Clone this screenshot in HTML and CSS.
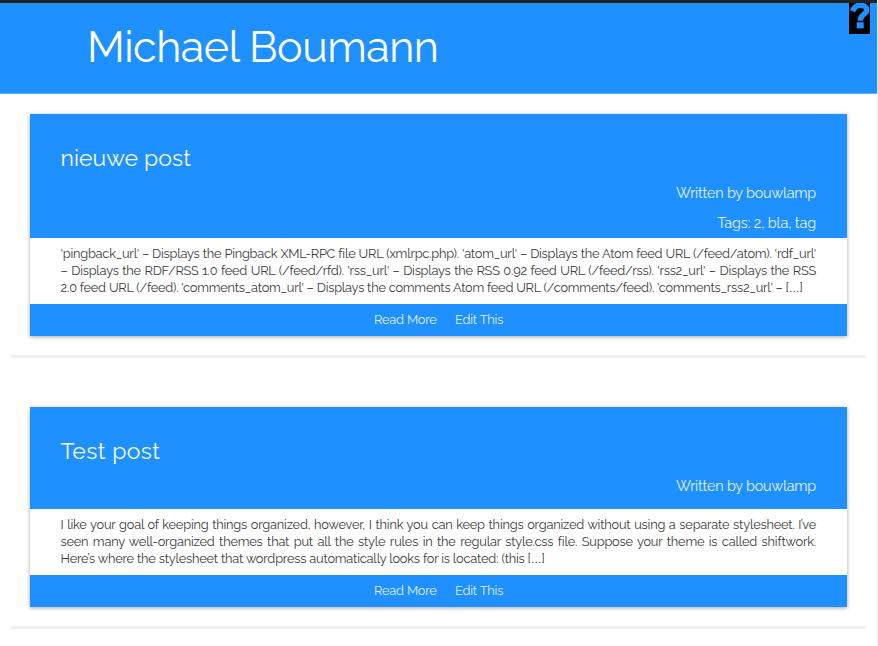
FILE: index.html
```html
<!DOCTYPE html>
<html lang="nl">
<head>
<meta charset="utf-8">
<title>Michael Boumann</title>
<link rel="stylesheet" href="styles.css">
</head>
<body>
<header class="site-header">
  <h1 class="site-title">Michael Boumann</h1>
  <svg class="help" viewBox="0 0 21 31" aria-hidden="true">
    <path fill="#000" d="M0 0H21V31H0Z"/>
    <path fill="none" stroke="#1e90ff" stroke-width="5.4" d="M3.6 8.2C5 4.5 7.5 2.2 11.2 2.2C15 2.2 17.8 4 17.8 7C17.8 11.5 11.2 11 11.2 17.8"/>
    <path fill="#1e90ff" d="M7.7 19.2H14.7V25.4H7.7Z"/>
  </svg>
</header>
<main class="posts">
  <article class="post">
    <div class="post-head tagged">
      <h2 class="post-title first">nieuwe post</h2>
      <p class="meta"><span class="author">Written by bouwlamp</span></p>
      <p class="meta"><span class="tags">Tags: 2, bla, tag</span></p>
    </div>
    <div class="excerpt urls">
      <p class="line">'pingback_url' – Displays the Pingback XML-RPC file URL (xmlrpc.php). 'atom_url' – Displays the Atom feed URL (/feed/atom). 'rdf_url'</p>
      <p class="line">– Displays the RDF/RSS 1.0 feed URL (/feed/rfd). 'rss_url' – Displays the RSS 0.92 feed URL (/feed/rss). 'rss2_url' – Displays the RSS</p>
      <p class="line a3">2.0 feed URL (/feed). 'comments_atom_url' – Displays the comments Atom feed URL (/comments/feed). 'comments_rss2_url' – [<span class="dots">…</span>]</p>
    </div>
    <footer class="actions"><a class="more">Read More</a><a class="edit">Edit This</a></footer>
  </article>
  <hr class="rule">
  <article class="post">
    <div class="post-head">
      <h2 class="post-title second">Test post</h2>
      <p class="meta"><span class="author">Written by bouwlamp</span></p>
    </div>
    <div class="excerpt">
      <p class="line">I like your goal of keeping things organized, however, I think you can keep things organized without using a separate stylesheet. I’ve</p>
      <p class="line">seen many well-organized themes that put all the style rules in the regular style.css file. Suppose your theme is called shiftwork.</p>
      <p class="line b3">Here’s where the stylesheet that wordpress automatically looks for is located: (this [<span class="dots">…</span>]</p>
    </div>
    <footer class="actions"><a class="more">Read More</a><a class="edit">Edit This</a></footer>
  </article>
  <hr class="rule">
</main>
</body>
</html>
```
FILE: styles.css
```css
* { box-sizing: border-box; }
html { overflow: hidden; }
body {
  margin: 0;
  height: 646px;
  overflow: hidden;
  border-right: 1px solid #ececec;
  background: #fff;
  color: #3c3c3c;
  font-family: Raleway, Lato, sans-serif;
}
h1, h2, p { margin: 0; font-weight: 400; white-space: nowrap; }
.site-header {
  display: flex;
  justify-content: space-between;
  height: 94px;
  border-top: 3px solid #222;
  border-bottom: 1px solid #5cafff;
  padding: 0 7px 0 87px;
  background: #1e90ff;
  color: #fff;
}
.site-title { font-size: 43px; font-weight: 400; line-height: 88px; letter-spacing: -.48px; }
.help { width: 21px; height: 31px; }
.posts { padding: 20px 11px 0; }
.post {
  margin: 0 19px;
  box-shadow: 0 1px 4px rgba(0, 0, 0, .35);
}
.post-head {
  height: 102px;
  padding: 30px 31px 0 30.5px;
  background: #1e90ff;
  color: #f4f9ff;
}
.post-head.tagged { height: 124px; }
.post-title { font-size: 23px; line-height: 28px; margin-bottom: 6px; }
.post-title.first { letter-spacing: .05px; }
.post-title.second { letter-spacing: .4px; }
.meta {
  color: #e6f2ff;
  font-size: 14.4px;
  line-height: 30px;
  text-align: right;
  letter-spacing: -.2px;
}
.tags { letter-spacing: -.12px; }
.excerpt {
  height: 66px;
  padding: 7px 31px 0 30.5px;
  background: #fff;
  font-size: 12.8px;
  line-height: 17px;
  letter-spacing: -.2px;
}
.excerpt.urls { letter-spacing: -.23px; }
.line { text-align: justify; text-align-last: justify; }
.line.a3 { width: 742px; }
.line.b3 { width: 482px; }
.dots { font-family: "Liberation Sans", sans-serif; font-size: 11px; }
.actions {
  display: flex;
  gap: 18.4px;
  height: 32px;
  padding-left: 344px;
  background: #1e90ff;
  color: #e0efff;
  font-size: 12.8px;
  line-height: 32px;
  letter-spacing: -.19px;
}
.rule { margin: 19px 0 49px; border: 0; height: 3px; background: #f0f0f0; }
```
